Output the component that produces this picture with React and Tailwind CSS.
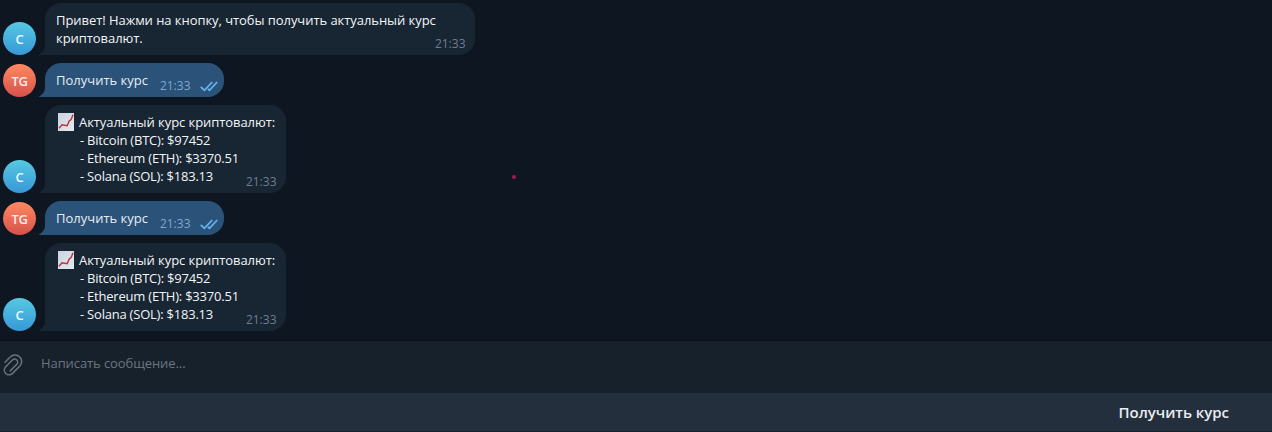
const messages = [
  {
    id: 1,
    from: "bot",
    lines: ["Привет! Нажми на кнопку, чтобы получить актуальный курс", "криптовалют."],
    size: "h-[52px] w-[430px]",
  },
  { id: 2, from: "user", lines: ["Получить курс"], size: "h-[34px] w-[179px]" },
  { id: 3, from: "bot", rates: true, size: "h-[88px] w-[241px]" },
  { id: 4, from: "user", lines: ["Получить курс"], size: "h-[34px] w-[179px]" },
  { id: 5, from: "bot", rates: true, size: "h-[88px] w-[241px]" },
];

const rates = ["- Bitcoin (BTC): $97452", "- Ethereum (ETH): $3370.51", "- Solana (SOL): $183.13"];

function ChartIcon() {
  return (
    <svg width="16" height="18" viewBox="0 0 16 18" className="block shrink-0">
      <defs>
        <linearGradient id="paper" x1="0" y1="0" x2="1" y2="1">
          <stop offset="0" stopColor="#c9d3df" />
          <stop offset="1" stopColor="#e6e9f0" />
        </linearGradient>
      </defs>
      <rect width="16" height="18" fill="url(#paper)" />
      <path d="M1 15.2 4 11.8l5.2 1 2-4.8 1.9-1.5L15 1.8" fill="none" stroke="#b8343d" strokeWidth="1.4" />
    </svg>
  );
}

function Checks() {
  return (
    <svg width="18" height="11" viewBox="0 0 18 11" fill="none" stroke="#68b3ee" strokeWidth="1.8" className="block">
      <path d="M.7 5.8 4.4 9.3 12.3 1M7.9 7.8 9.5 9.3 17.2 1" />
    </svg>
  );
}

function Avatar({ user }) {
  return (
    <div
      className={
        user
          ? "flex h-[33px] w-[33px] shrink-0 items-center justify-center rounded-full bg-linear-to-b from-[#ff8960] to-[#d5514b] pt-[2px] text-[13px] font-semibold tracking-[-0.4px] text-[#fbeeee]"
          : "flex h-[33px] w-[33px] shrink-0 items-center justify-center rounded-full bg-linear-to-b from-[#57c8e1] to-[#3798d7] pt-[2px] text-[13px] font-semibold text-[#eefbff]"
      }
    >
      {user ? "TG" : "C"}
    </div>
  );
}

function Message({ message }) {
  const user = message.from === "user";
  return (
    <div className="flex items-end gap-[9px]">
      <Avatar user={user} />
      <div
        className={`relative rounded-[16px] rounded-bl-none pl-[11px] pt-[8px] text-[13px] leading-[18px] ${message.size} ${
          user ? "bg-[#2b5278] text-[#e5edf5]" : "bg-[#182533] text-[#f2f5f7]"
        }`}
      >
        <svg width="7" height="10" viewBox="0 0 7 10" className="absolute bottom-0 -left-[6px]">
          <path d="M7 0H6C6 4 4 7.5.3 9.2L0 10h7z" fill={user ? "#2b5278" : "#182533"} />
        </svg>
        {message.rates ? (
          <div className="flex gap-[5px] pl-[2px]">
            <ChartIcon />
            <div className="whitespace-nowrap">
              <p className="tracking-[-0.065px]">Актуальный курс криптовалют:</p>
              {rates.map((rate) => (
                <p key={rate} className="pl-px tracking-[-0.22px]">
                  {rate}
                </p>
              ))}
            </div>
          </div>
        ) : (
          message.lines.map((line) => (
            <p key={line} className={user ? "whitespace-nowrap" : "whitespace-nowrap tracking-[-0.055px]"}>
              {line}
            </p>
          ))
        )}
        <div
          className={`absolute flex items-center text-[12px] leading-[16px] ${
            user ? "right-[6px] bottom-[3px] gap-[9.5px] text-[#7da8d3]" : "right-[9.5px] bottom-[3px] text-[#6d7f8f]"
          }`}
        >
          <span>21:33</span>
          {user && <Checks />}
        </div>
      </div>
    </div>
  );
}

export default function App() {
  return (
    <div className="flex h-[432px] w-[1272px] flex-col overflow-hidden bg-[#0e1621] font-['Open_Sans','Noto_Sans',sans-serif]">
      <main className="relative flex h-[340px] flex-col gap-2 pt-[3px] pl-[3px]">
        {messages.map((message) => (
          <Message key={message.id} message={message} />
        ))}
        <span className="absolute top-[175px] left-[512px] h-[4px] w-[4px] rounded-full bg-[#aa1750]" />
      </main>
      <div className="flex h-[53px] items-center border-t border-[#0b121b] bg-[#17212b]">
        <svg
          width="20"
          height="22"
          viewBox="0 0 20 22"
          fill="none"
          stroke="#6b747d"
          strokeWidth="1.5"
          strokeLinecap="round"
          className="ml-[3px] -mt-[4px]"
        >
          <path d="M2 8.2 7.2 3a6.6 6.6 0 0 1 9.6 0 6.4 6.4 0 0 1 .1 8.9l-7.4 7.5a4.7 4.7 0 0 1-6.8 0 4.8 4.8 0 0 1 0-6.7L9.4 6a3 3 0 0 1 4.4 0 3 3 0 0 1 0 4.3l-6.6 6.6" />
        </svg>
        <span className="-mt-[7px] ml-[18px] text-[13px] tracking-[-0.09px] text-[#6b7580]">Написать сообщение...</span>
      </div>
      <div className="flex h-[39px] justify-end border-b border-[#17212b] bg-[#242f3d] pr-[43px] text-[15px] leading-[39px] font-semibold tracking-[-0.04px] text-[#e8ecf0]">
        Получить курс
      </div>
    </div>
  );
}
